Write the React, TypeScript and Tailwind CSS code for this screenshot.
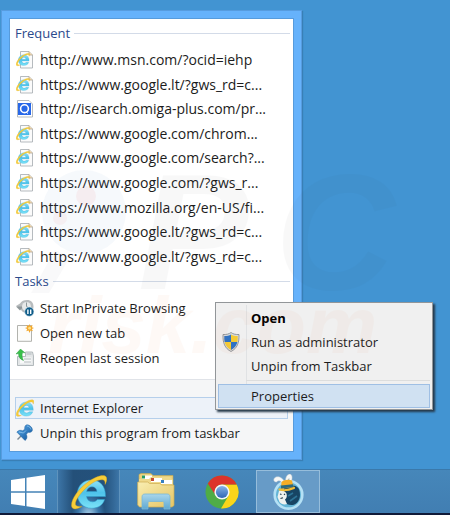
import React from "react";

const frequent = [
  "http://www.msn.com/?ocid=iehp",
  "https://www.google.lt/?gws_rd=c...",
  "http://isearch.omiga-plus.com/pr...",
  "https://www.google.com/chrom...",
  "https://www.google.com/search?...",
  "https://www.google.com/?gws_r...",
  "https://www.mozilla.org/en-US/fi...",
  "https://www.google.lt/?gws_rd=c...",
  "https://www.google.lt/?gws_rd=c...",
];

function IeMark() {
  return (
    <>
      <path
        d="M35.500 25.500H16.500c.5 3.500 3 5.300 6 5.300 2.200 0 3.800-.8 4.800-2.300h7.300C33 34 28 37.200 21.800 37.200 13 37.200 7.300 31 7.300 23S13.300 9 21.600 9 35.800 15 35.500 25.500Zm-8.500-5c-.3-3-2.300-4.700-5-4.700s-4.800 1.700-5.400 4.700Z"
        fill="url(#ieBlue)"
        stroke="#2d9fce"
        strokeWidth=".5"
        fillRule="evenodd"
      />
      <path
        d="M12 35.500C6 39 2 38.500 1.500 35 .8 28 9 17.500 18 11 26 5 35 2.500 36.500 6.500c.7 2 0 4.500-1.500 7 .3-3-.3-4.500-2.500-4.700-5-.5-12 3.500-18.500 10.200C8 25 4.500 31.500 5.700 34c.8 1.500 3 1.500 6.300 1.500Z"
        fill="#f7cd38"
        stroke="#cf9c18"
        strokeWidth=".4"
      />
    </>
  );
}

function Gradients() {
  return (
    <svg className="absolute size-0" aria-hidden="true">
      <defs>
        <linearGradient id="ieBlue" x1="0" y1="0" x2="0" y2="1">
          <stop offset="0" stopColor="#8fe3f8" />
          <stop offset=".45" stopColor="#4ec2ea" />
          <stop offset="1" stopColor="#7be2f7" />
        </linearGradient>
        <linearGradient id="folder" x1="0" y1="0" x2="1" y2="1">
          <stop offset="0" stopColor="#f9eeb2" />
          <stop offset="1" stopColor="#e5c565" />
        </linearGradient>
        <linearGradient id="stand" x1="0" y1="0" x2="0" y2="1">
          <stop offset="0" stopColor="#a9d6ec" />
          <stop offset="1" stopColor="#5fa9d2" />
        </linearGradient>
        <linearGradient id="hub" x1="0" y1="0" x2="0" y2="1">
          <stop offset="0" stopColor="#86b3e8" />
          <stop offset="1" stopColor="#2f66b4" />
        </linearGradient>
        <linearGradient id="pin" x1="0" y1="0" x2="1" y2="1">
          <stop offset="0" stopColor="#5eb0ee" />
          <stop offset="1" stopColor="#0d4f95" />
        </linearGradient>
      </defs>
    </svg>
  );
}

function PageIcon() {
  return (
    <svg viewBox="0 0 18 18" className="size-[18px] shrink-0" aria-hidden="true">
      <path d="M4.500.5h8.500l3.500 3.500v13h-12Z" fill="#fbfbfb" stroke="#a3a9ae" strokeWidth=".8" />
      <path d="M13 .5V4h3.500" fill="#f3d9b0" stroke="#b5a68f" strokeWidth=".8" />
      <g transform="translate(-.4 .4) scale(.38)">
        <IeMark />
      </g>
    </svg>
  );
}

function OmigaIcon() {
  return (
    <svg viewBox="0 0 18 18" className="size-[18px] shrink-0" aria-hidden="true">
      <path d="M1.500.5H13l3.500 3.500v13h-15Z" fill="#fff" stroke="#a3a9ae" strokeWidth=".8" />
      <path d="M2 3h13v12H2Z" fill="#2868e8" />
      <circle cx="8.500" cy="8.700" r="3.900" fill="none" stroke="#fff" strokeWidth="1.600" />
      <path d="m10 12 2 1.500" stroke="#fff" />
    </svg>
  );
}

function PrivateIcon() {
  return (
    <svg viewBox="0 0 18 18" className="size-[18px] shrink-0" aria-hidden="true">
      <path d="M0 7 4 4.500C5.500 2 8 1 11 1c4 0 6.500 2.500 6.500 6.500S15 14 11 14c-3.500 0-6-2-6.500-4.500Z" fill="#b8bcbe" />
      <path d="M0 7.500h7.500L4 11.500Z" fill="#8f979a" />
      <circle cx="10.500" cy="7.500" r="4.500" fill="#e7e9e9" />
      <path d="M10.500 3.500v4L13 9" fill="none" stroke="#8d979a" />
      <circle cx="13.300" cy="12.700" r="4.600" fill="#0d5b88" stroke="#d9e8ef" strokeWidth=".6" />
      <path d="M11.900 10.500v4.400M14.700 10.500v4.400" stroke="#fff" strokeWidth="1.400" />
    </svg>
  );
}

function NewTabIcon() {
  return (
    <svg viewBox="0 0 18 18" className="size-[18px] shrink-0" aria-hidden="true">
      <path d="M1.500 1.500h14v15.800h-14Z" fill="#fcfcfa" stroke="#a9aaa5" strokeWidth=".9" />
      <path d="m13.500 0 .8 2.200L16.600 1l-.7 2.300 2.100.7-2.100 1.100 1 2.100-2.300-.8L13.500 9l-.9-2.600-2.300.9.9-2.200L9 4l2.200-.8-.9-2.300 2.300 1.200Z" fill="#f3a82c" />
      <circle cx="13.600" cy="4.200" r="1.400" fill="#fde28a" />
    </svg>
  );
}

function ReopenIcon() {
  return (
    <svg viewBox="0 0 18 18" className="size-[18px] shrink-0" aria-hidden="true">
      <path d="M1.500 7.500h8V3h7l1 4v9.500h-16Z" fill="#e3e6e7" stroke="#a3abae" strokeWidth=".8" />
      <path d="M4 8.500h11.500v6H4Z" fill="#f9fafa" />
      <path d="M8 10h7M8 13h7M10.500 5h5" stroke="#a9b2b5" strokeWidth=".9" />
      <path d="M4.500 0 9 3.800 6.500 3.600C5.800 6 6 9 7.500 11.500 4 10.500 2.300 7.500 2.600 4.500L0 5Z" fill="#39c04a" stroke="#24903a" strokeWidth=".4" />
    </svg>
  );
}

function IeIcon({ className }: { className: string }) {
  return (
    <svg viewBox="1 4 36 34" className={className} aria-hidden="true">
      <IeMark />
    </svg>
  );
}

function PinIcon() {
  return (
    <svg viewBox="0 0 18 18" className="size-[18px] shrink-0" aria-hidden="true">
      <path d="m5 12-3.500 3.500" stroke="#7e8a93" strokeWidth="1.400" />
      <path d="M.8 8c1.700-1.800 4-2.200 6-1.200l2-1.800C8.500 3 9 1.500 10.500.9c2.800-.7 6.500 3 5.800 5.700-.6 1.600-2.300 2-4.200 1.700l-1.800 2c1.200 2.700.7 5-1.300 6.200Z" fill="url(#pin)" stroke="#145b9d" strokeWidth=".5" />
      <path d="M11 2c1.800 0 3.700 1.700 4 3.500M3 8l4.500 1 2.500-2.500" stroke="#8ec7f0" strokeWidth=".8" fill="none" />
    </svg>
  );
}

function ShieldIcon() {
  return (
    <svg viewBox="0 0 18 20" className="h-5 w-[18px]" aria-hidden="true">
      <path d="M9 .5c2 1.500 4.500 2.200 8 2 .4 8-1.800 14-8 17C2.800 16.500.6 10.500 1 2.500c3.500.2 6-.5 8-2Z" fill="#d8dcdf" stroke="#7d858b" strokeWidth=".8" />
      <path d="M9 2.500V10H2.600C2.200 8 2.200 6 2.300 4.100 5 4.100 7.200 3.600 9 2.500ZM9 10h6.400c-.9 3.500-3 6.300-6.400 8Z" fill="#2f72c4" />
      <path d="M9 2.500c1.800 1.100 4 1.600 6.700 1.600.1 2 .1 3.900-.3 5.900H9ZM9 10v8c-3.400-1.700-5.500-4.500-6.400-8Z" fill="#f5cb35" />
    </svg>
  );
}

function WindowsIcon() {
  return (
    <svg viewBox="0 0 34 34" className="size-[34px]" fill="#fff" aria-hidden="true">
      <path d="m0 5 14-2v13.300H0ZM15.500 2.800 34 0v16.300H15.500ZM0 17.700h14V31L0 29ZM15.500 17.700H34V34l-18.500-2.700Z" />
    </svg>
  );
}

function ExplorerIcon() {
  return (
    <svg viewBox="0 0 38 37" className="h-[37px] w-[38px]" aria-hidden="true">
      <path d="M2 1.500 4 .5h10l2 2h20V14H2Z" fill="#ead17c" stroke="#c9a94d" strokeWidth=".6" />
      <path d="M5 2.500h10v4H5Z" fill="#fff" />
      <path d="M5 2.500h3v3H5Z" fill="#2b9b62" />
      <path d="M2 6h10l2-2h19l3 3v10H2Z" fill="#efd98b" />
      <path d="M14 5h11v4H14Z" fill="#fff" />
      <path d="M14 5h3v3h-3Z" fill="#c64b31" />
      <path d="M24 7h11v4H24Z" fill="#fff" />
      <path d="M24 7h3v3h-3Z" fill="#367fc1" />
      <path d="M.7 9h10l2 1.500h10L25 12h12v20.500l-2 1.500H2.500L.7 32Z" fill="url(#folder)" stroke="#cfad51" strokeWidth=".7" />
      <path d="M5 36V24c0-2 1-3 3-3h22c2 0 3 1 3 3v12h-6v-6c0-1-.5-1.500-1.500-1.500h-13c-1 0-1.500.5-1.500 1.500v6Z" fill="url(#stand)" stroke="#7ab7d5" strokeWidth=".8" />
    </svg>
  );
}

function ChromeIcon() {
  return (
    <svg viewBox="0 0 34 34" className="size-[34px]" aria-hidden="true">
      <circle cx="17" cy="17" r="16.500" fill="#4fac46" />
      <path d="M17 9.500h14.700A16.500 16.500 0 0 1 16 33.500l7.500-12.700Z" fill="#fbd51a" />
      <path d="M2.800 8.500A16.500 16.500 0 0 1 31.700 9.500H17a7.500 7.500 0 0 0-7 5.500l-.3 4Z" fill="#dc342b" />
      <circle cx="17" cy="17" r="7.600" fill="#f5f7f8" />
      <circle cx="17" cy="17" r="6.100" fill="url(#hub)" />
    </svg>
  );
}

function RabbitIcon() {
  return (
    <svg viewBox="0 0 32 36" className="h-9 w-8" aria-hidden="true">
      <circle cx="16.500" cy="20.800" r="13.800" fill="#62b4d6" stroke="#b5e1f5" strokeWidth="2.600" />
      <path d="M12 14c0-1 11-4 13-1 2 1 3 4 3 8 0 5-3 9-7 10-4 .5-8-1-9-4Z" fill="#174564" />
      <path d="m16 22 5-3M18 27l7-5" stroke="#2d7396" strokeWidth="1.600" />
      <path d="M7 17c3-1 6 0 7.500 2.500.8 3 0 5-1.500 6l2 4.500c-3 1-6 0-7.500-2L5.500 23Z" fill="#eef1ef" />
      <path d="m8 20 1.500.5M12 20l1 .8M8.500 24.500l2.500-.8" stroke="#233d4c" strokeWidth="1.200" />
      <path d="M11 11C9.500 7 7 5.500 4.500 8 2 8 1 6 2.500 4c2-2 5.500-1.500 7.500.5 2 1.700 3 3.500 3.500 6ZM13.500 7c0-4 1.500-6.500 4-7 2 0 3 2 2.500 5l-1 5h-2l.2-5.500c-1.200.5-1.700 2-1.700 4Z" fill="#f7f8f7" stroke="#b9c5cc" strokeWidth=".5" />
      <path d="m9 15 .5-7c2.500-2.500 7.500-3 10.500-1.500L21.500 13Z" fill="#f5ad25" />
      <path d="m9 11.500 12-1.200.5 2.700L9 14.500Z" fill="#2a6a80" />
      <path d="M7.500 15.500c4 1.300 9.500.6 14.500-1.500" fill="none" stroke="#f4bd34" strokeWidth="2.200" strokeLinecap="round" />
    </svg>
  );
}

function Watermark() {
  return (
    <svg
      viewBox="0 0 450 515"
      className="pointer-events-none absolute top-0 left-0 h-[515px] w-[450px] font-['Liberation_Sans',Arial,sans-serif] font-bold italic"
      aria-hidden="true"
    >
      <circle cx="84" cy="212" r="42" fill="#6c93c8" opacity=".06" />
      <circle cx="86" cy="196" r="10" fill="#ef5a50" opacity=".07" />
      <circle cx="60" cy="218" r="7" fill="#ef5a50" opacity=".06" />
      <path d="m55 250 15 7-21 36H31Z" fill="#3d4650" opacity=".03" />
      <g fill="#3d4650" opacity=".03" fontSize="166">
        <text x="138" y="289">P</text>
        <text x="275" y="289">C</text>
      </g>
      <text x="48" y="353" fontSize="80" fill="#ee7a3c" opacity=".04">
        risk.com
      </text>
    </svg>
  );
}

function Heading({ children }: { children: React.ReactNode }) {
  return (
    <h2 className="flex items-center gap-1 pr-[3px] pl-[5px] text-[13px] leading-6 text-[#2b4a8c]">
      {children}
      <span className="h-px flex-1 bg-[#d3dbe8]" />
    </h2>
  );
}

function Row({ icon, children, active = false }: { icon: React.ReactNode; children: React.ReactNode; active?: boolean }) {
  return (
    <li className="flex">
      <button
        className={
          active
            ? "mx-[5px] flex flex-1 items-center gap-[6px] border border-[#b5cfeb] bg-[#edf2f9] text-left whitespace-nowrap"
            : "mx-[5px] flex flex-1 items-center gap-[6px] border border-transparent text-left whitespace-nowrap"
        }
      >
        {icon}
        {children}
      </button>
    </li>
  );
}

function MenuItem({ icon, children, className = "" }: { icon?: React.ReactNode; children: React.ReactNode; className?: string }) {
  return (
    <button role="menuitem" className={`flex h-6 w-full items-center border text-left ${className || "border-transparent"}`}>
      <span className="flex w-8 shrink-0 pl-[3px]">{icon}</span>
      {children}
    </button>
  );
}

export default function App() {
  return (
    <div className="relative flex min-h-screen flex-col overflow-hidden bg-[#4294d2] font-['Open_Sans','Noto_Sans',sans-serif] text-[13px] leading-5 text-[#1c1c1c]">
      <Gradients />
      <main className="flex-1 pt-[10px] pl-px">
        <section className="w-[301px] border border-[#579cdf] bg-[#66b2fb] p-[7px] shadow-[1px_1px_1px_#397fb5]" aria-label="Jump list">
          <div className="border border-[#579bdc] bg-white">
            <div className="pt-[2px] pb-[9px]">
              <Heading>Frequent</Heading>
              <ul className="mt-[3px] grid min-h-[221px] auto-rows-fr text-sm">
                {frequent.map((url, i) => (
                  <Row key={i} icon={i === 2 ? <OmigaIcon /> : <PageIcon />}>
                    {url}
                  </Row>
                ))}
              </ul>
              <Heading>Tasks</Heading>
              <ul className="mt-[3px] grid min-h-[74px] auto-rows-fr">
                <Row icon={<PrivateIcon />}>Start InPrivate Browsing</Row>
                <Row icon={<NewTabIcon />}>Open new tab</Row>
                <Row icon={<ReopenIcon />}>Reopen last session</Row>
              </ul>
            </div>
            <ul className="grid gap-[3px] border-t border-[#e0e3e8] bg-[#f5f6f7] pt-[17px] pb-[7px]">
              <Row icon={<IeIcon className="size-[18px] shrink-0" />} active>
                Internet Explorer
              </Row>
              <Row icon={<PinIcon />}>Unpin this program from taskbar</Row>
            </ul>
          </div>
        </section>
      </main>

      <div
        role="menu"
        className="absolute top-[302px] left-[215px] w-[218px] border border-[#929699] bg-[#f0f0f0] px-[2px] pt-[3px] pb-px shadow-[2px_2px_2px_#26394a]"
      >
        <div className="absolute inset-y-[2px] left-[30px] w-px bg-[#e0e2e4]" />
        <div className="relative">
          <MenuItem className="border-transparent font-bold text-black">Open</MenuItem>
          <MenuItem icon={<ShieldIcon />}>Run as administrator</MenuItem>
          <MenuItem>Unpin from Taskbar</MenuItem>
          <div className="mt-[2px] mb-[3px] ml-7 h-px bg-[#dcdddd]" />
          <MenuItem className="border-[#9fbfe4] bg-[#d0e1f2]">Properties</MenuItem>
        </div>
      </div>

      <nav className="flex h-[46px] border-t border-b-2 border-t-[#3a79ab] border-b-[#101a38] bg-linear-to-b from-[#4687ba] to-[#417eb2]" aria-label="Taskbar">
        <button aria-label="Start" className="flex w-[57px] items-center pl-[11px]">
          <WindowsIcon />
        </button>
        <button
          aria-label="Internet Explorer"
          className="flex w-[63px] items-center justify-center border-x border-[#5f93bd] bg-[radial-gradient(ellipse_at_50%_110%,#b8dcf2_0%,#3975a8_25%,transparent_40%),linear-gradient(to_right,#3c75a7,#245079_25%,#23517c_75%,#3c75a7)]"
        >
          <IeIcon className="size-9" />
        </button>
        <button aria-label="File Explorer" className="flex w-[72px] items-center justify-center">
          <ExplorerIcon />
        </button>
        <button aria-label="Google Chrome" className="flex w-16 items-center pl-[13px]">
          <ChromeIcon />
        </button>
        <button aria-label="Rabbit app" className="flex w-16 items-center justify-center border border-[#96bddb] bg-[#679bc7]">
          <RabbitIcon />
        </button>
      </nav>
      <Watermark />
    </div>
  );
}
